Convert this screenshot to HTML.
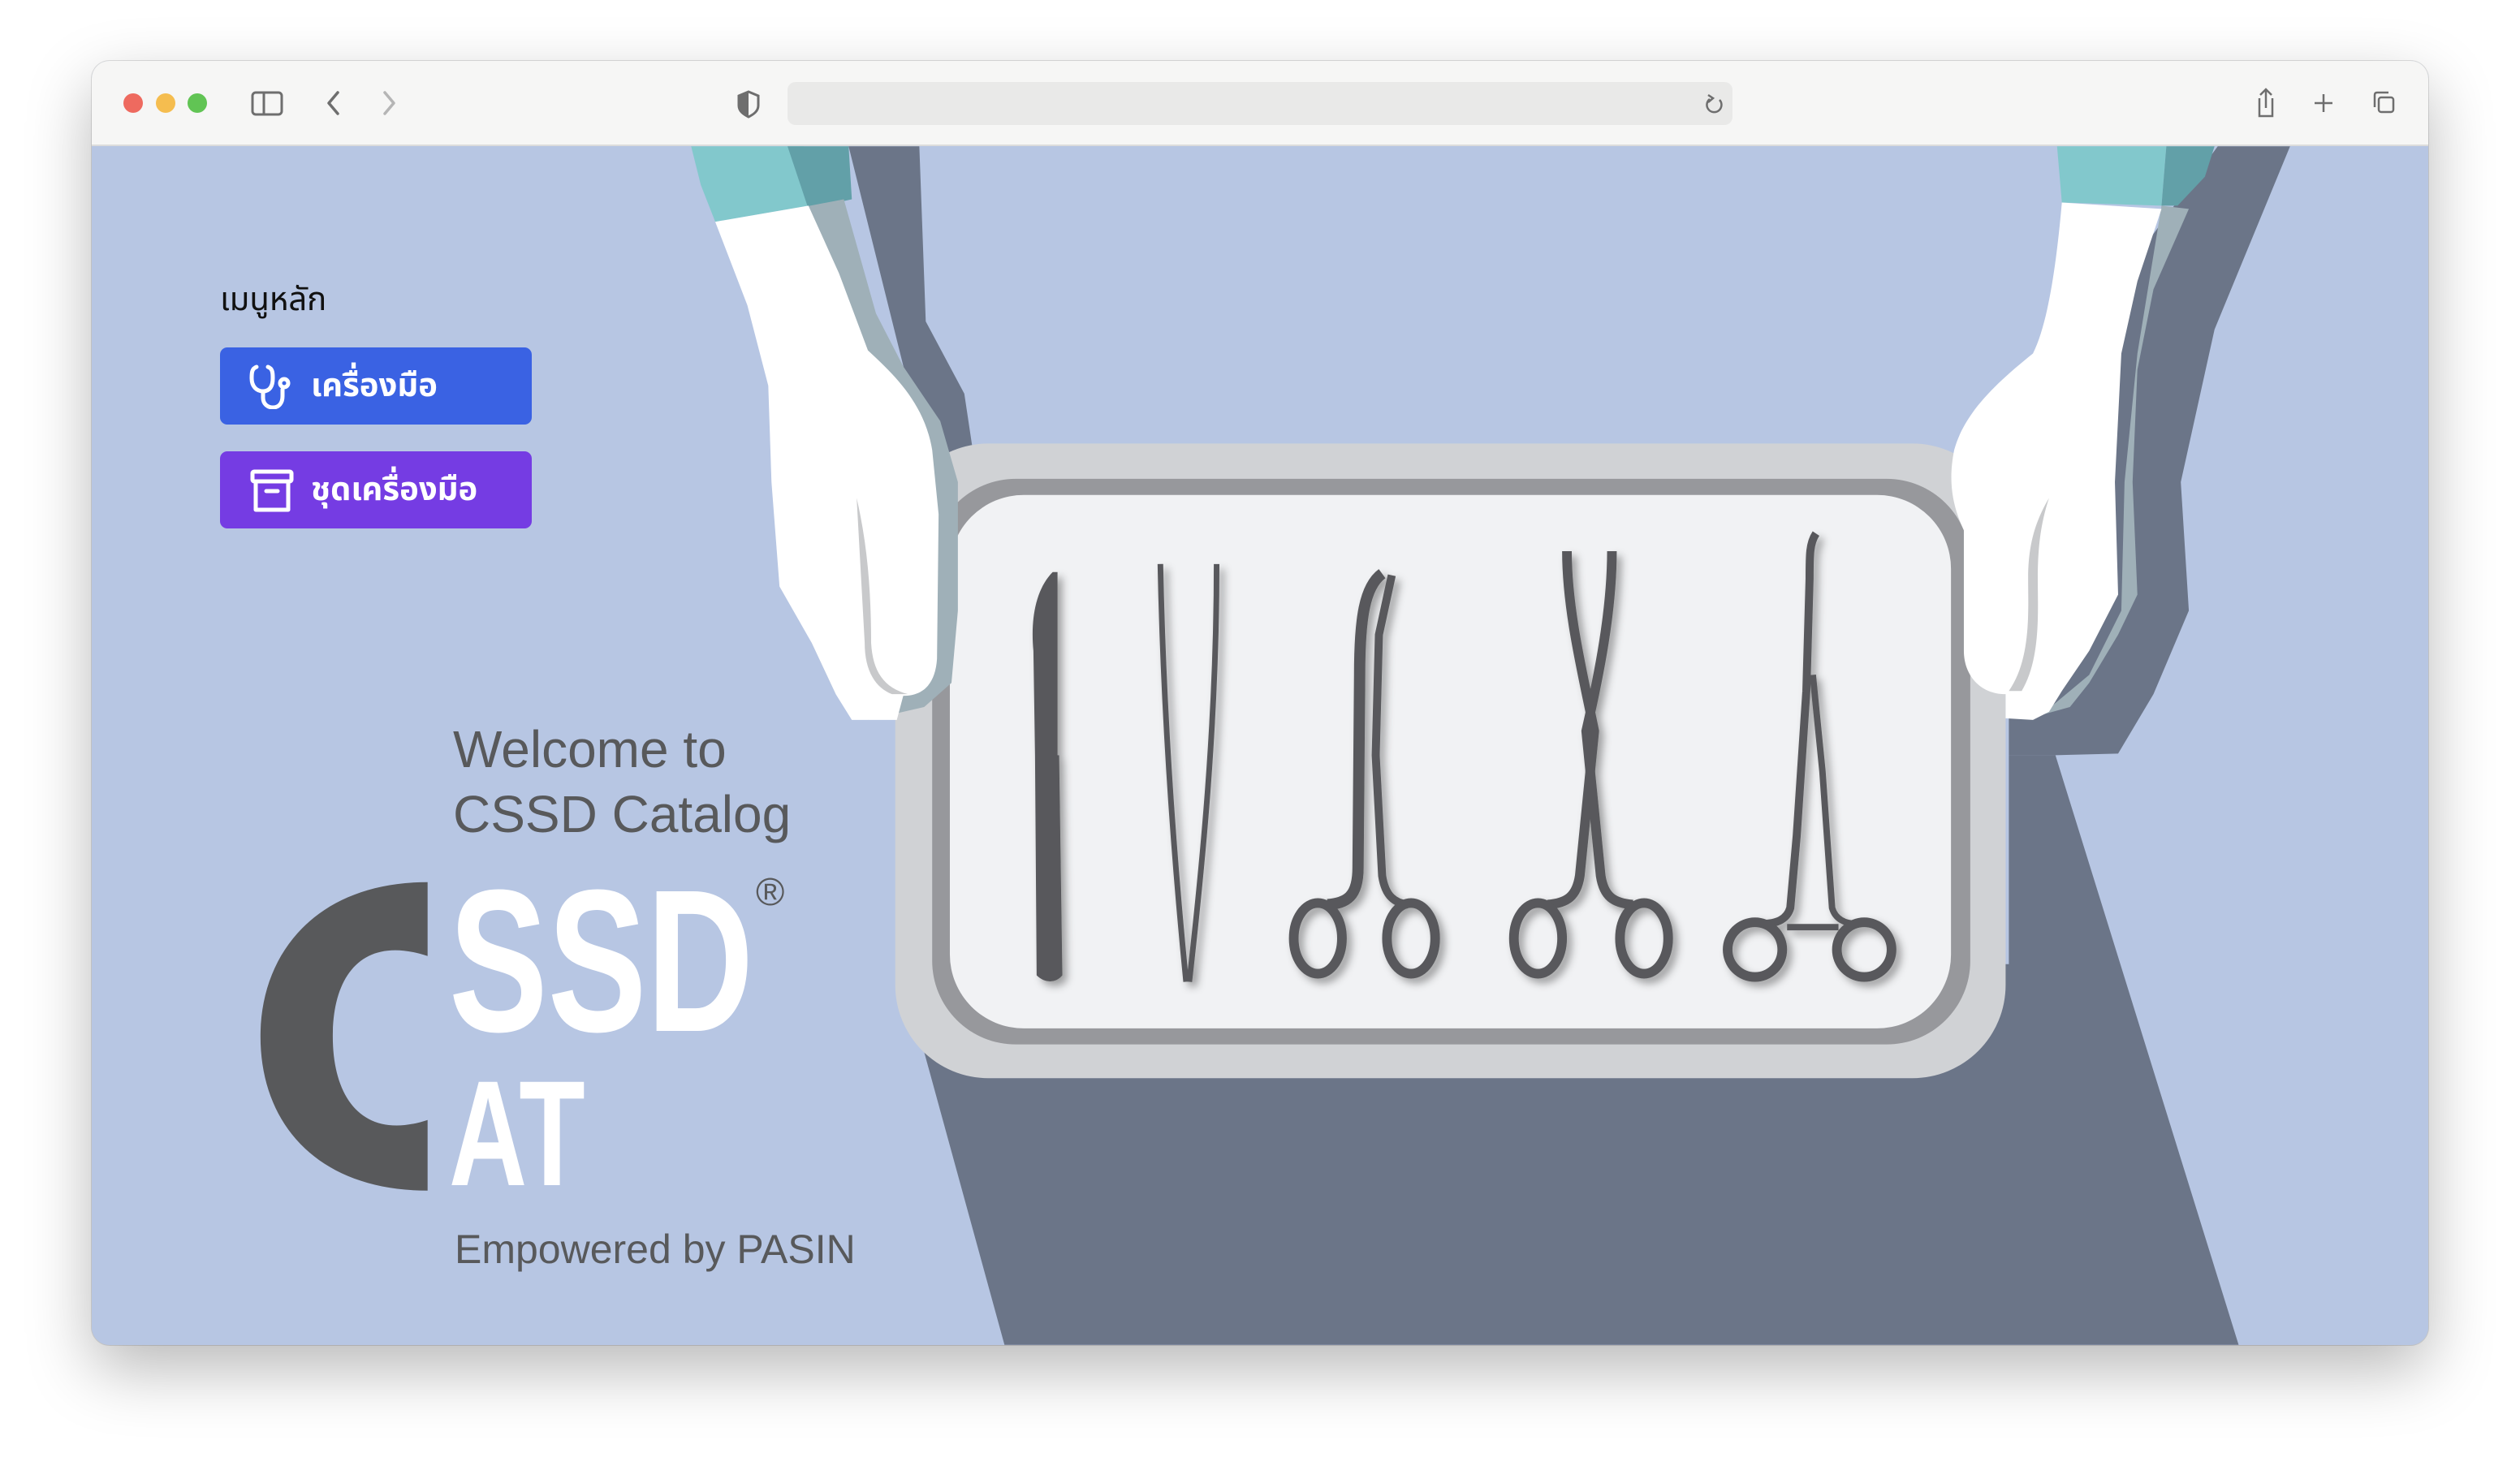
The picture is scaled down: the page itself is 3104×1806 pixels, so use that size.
<!DOCTYPE html>
<html><head><meta charset="utf-8"><style>
*{margin:0;padding:0;box-sizing:border-box}
html,body{width:3104px;height:1806px;background:#fff;overflow:hidden;font-family:"Liberation Sans",sans-serif}
#win{position:absolute;left:113px;top:75px;width:2878px;height:1582px;border-radius:22px;overflow:hidden;background:#b7c6e3;box-shadow:0 30px 80px rgba(0,0,0,.28),0 0 0 1px rgba(0,0,0,.12)}
#bar{position:absolute;left:0;top:0;width:2878px;height:105px;background:#f6f6f5;border-bottom:2px solid #dcdcdc}
#art{position:absolute;left:0;top:0}
.t{position:absolute;color:#58595b;white-space:nowrap}
.btn{position:absolute;left:158px;width:384px;height:95px;border-radius:9px;color:#fff;font-size:40px;font-weight:bold;line-height:95px;padding-left:112px;font-family:"Liberation Sans","Noto Sans Thai",sans-serif}
</style></head><body>
<div id="win">
<div id="bar">
<svg width="2878" height="105" viewBox="113 75 2878 105" style="position:absolute;left:0;top:0">
<circle cx="164" cy="127" r="12" fill="#ee6a5f"/><circle cx="204" cy="127" r="12" fill="#f5bd4f"/><circle cx="243" cy="127" r="12" fill="#61c454"/>
<rect x="311" y="114" width="36" height="27" rx="4" fill="none" stroke="#6e6e6e" stroke-width="3"/><line x1="325" y1="114" x2="325" y2="141" stroke="#6e6e6e" stroke-width="3"/>
<path d="M416,114 L405,127 L416,140" fill="none" stroke="#6e6e6e" stroke-width="3.5" stroke-linecap="round" stroke-linejoin="round"/>
<path d="M474,114 L485,127 L474,140" fill="none" stroke="#b5b5b5" stroke-width="3.5" stroke-linecap="round" stroke-linejoin="round"/>
<path d="M922,113 L934,118 L934,130 C934,137 928,141 922,144 C916,141 910,137 910,130 L910,118 Z" fill="none" stroke="#6e6e6e" stroke-width="3"/><path d="M922,113 L910,118 L910,130 C910,137 916,141 922,144 Z" fill="#6e6e6e"/>
<rect x="970" y="101" width="1164" height="53" rx="10" fill="#e9e9e8"/>
<path d="M2118,123 A9,9 0 1 1 2106,122" fill="none" stroke="#6e6e6e" stroke-width="2.5"/><path d="M2104,117 L2110,121 L2104,126" fill="none" stroke="#6e6e6e" stroke-width="2.5"/>
<path d="M2783,121 L2783,143 L2799,143 L2799,121" fill="none" stroke="#6e6e6e" stroke-width="2.5"/><path d="M2791,133 L2791,110 M2784,117 L2791,110 L2798,117" fill="none" stroke="#6e6e6e" stroke-width="2.5"/>
<path d="M2862,116 L2862,138 M2851,127 L2873,127" stroke="#6e6e6e" stroke-width="2.5"/>
<rect x="2930" y="120" width="18" height="18" rx="3" fill="none" stroke="#6e6e6e" stroke-width="2.5"/><path d="M2925,132 L2925,117 Q2925,114 2928,114 L2942,114" fill="none" stroke="#6e6e6e" stroke-width="2.5"/>
</svg>
</div>
<svg id="art" width="2878" height="1477" viewBox="57 91 1454 746" style="top:105px">
<defs><filter id="sh" x="-30%" y="-10%" width="160%" height="120%"><feDropShadow dx="3" dy="3" stdDeviation="2.5" flood-color="#000" flood-opacity="0.35"/></filter></defs>
<rect x="57" y="91" width="1454" height="746" fill="#b7c6e3"/>
<path d="M560,600 L1250,600 L1250,470 L1279,470 L1393,837 L625,837 Z" fill="#6b7588"/>
<path d="M528,91 L572,91 L576,200 L600,245 L606,285 L606,320 L585,320 Z" fill="#6b7588"/>
<path d="M1380,91 L1425,91 L1378,205 L1357,300 L1362,380 L1340,432 L1318,469 L1279,470 L1250,470 L1250,300 L1300,200 Z" fill="#6b7588"/>
<rect x="557" y="276" width="691" height="395" rx="58" fill="#d0d2d5"/>
<rect x="580" y="298" width="646" height="352" rx="52" fill="#97989c"/>
<rect x="591" y="308" width="623" height="332" rx="46" fill="#f1f2f4"/>
<g fill="#58595b" stroke="#58595b" filter="url(#sh)">
<path d="M655,356 C645,366 641,384 643,405 L644,470 L645,607 C650,612 657,612 661,607 L659,470 L658,470 L658,356 Z" stroke="none"/>
<path d="M722,351 C724,450 731,540 738,611" fill="none" stroke-width="3.5"/><path d="M757,351 C757,450 748,540 740,611" fill="none" stroke-width="3.5"/>
<path d="M860,357 C849,365 846,385 846,420 L845,540 C845,558 838,562 826,563" fill="none" stroke-width="7"/>
<path d="M866,358 L858,395 L856,470 L860,545 C862,558 868,562 876,563" fill="none" stroke-width="5"/>
<ellipse cx="820" cy="584" rx="15" ry="22" fill="none" stroke-width="6"/><ellipse cx="878" cy="584" rx="15" ry="22" fill="none" stroke-width="6"/>
<path d="M975,343 C975,380 985,420 992,455 L983,545 C981,558 975,562 963,563" fill="none" stroke-width="6"/>
<path d="M1003,343 C1003,380 995,420 987,455 L996,545 C998,558 1004,562 1016,563" fill="none" stroke-width="6"/>
<ellipse cx="957" cy="584" rx="15" ry="22" fill="none" stroke-width="6"/><ellipse cx="1023" cy="584" rx="15" ry="22" fill="none" stroke-width="6"/>
<path d="M1130,332 C1126,338 1126,345 1126,360 L1124,430 L1118,520 L1114,565 C1112,572 1106,575 1096,575" fill="none" stroke-width="5"/>
<path d="M1128,420 L1134,480 L1140,565 C1142,572 1148,575 1156,575" fill="none" stroke-width="4"/>
<line x1="1112" y1="577" x2="1144" y2="577" stroke-width="4"/>
<ellipse cx="1092" cy="591" rx="17" ry="17" fill="none" stroke-width="6"/><ellipse cx="1160" cy="591" rx="17" ry="17" fill="none" stroke-width="6"/>
</g>
<path d="M430,91 L500,91 L503,128 L445,138 L436,115 Z" fill="#82c8cc"/>
<path d="M490,91 L528,91 L530,124 L503,130 Z" fill="#62a0a8"/>
<path d="M462,136 L525,124 L545,195 L562,228 L585,262 L596,300 L596,380 L592,425 L575,440 L540,448 L520,432 L505,400 L490,365 L494,300 L492,240 L480,190 Z" fill="#9fb0b8"/>
<path d="M445,138 L503,128 L522,170 L540,218 C555,232 575,250 580,280 L584,320 L583,410 C582,425 575,433 562,433 L558,448 L530,448 L520,432 L505,400 L485,365 L480,300 L478,240 L465,190 Z" fill="#fff"/>
<path d="M533,310 C540,340 542,370 542,400 C543,418 550,428 565,432 L555,432 C545,428 538,418 538,400 Z" fill="#c8c9cb"/>
<path d="M1280,91 L1348,91 L1345,128 L1283,126 Z" fill="#82c8cc"/>
<path d="M1348,91 L1378,91 L1372,110 L1355,128 L1345,128 Z" fill="#62a0a8"/>
<path d="M1345,128 L1362,130 L1340,180 L1330,230 L1327,300 L1330,370 L1318,395 L1300,425 L1288,440 L1270,445 L1300,420 L1320,380 L1322,300 L1330,220 Z" fill="#9fb0b8"/>
<path d="M1283,126 L1345,130 L1330,175 L1320,220 L1316,300 L1318,370 L1300,405 L1283,430 L1275,443 L1265,448 L1248,447 L1248,432 C1232,432 1222,420 1222,405 L1222,330 C1215,315 1212,300 1216,280 C1222,258 1240,240 1265,220 C1275,200 1280,160 1283,126 Z" fill="#fff"/>
<path d="M1275,310 C1266,325 1262,340 1262,360 C1262,380 1264,410 1250,430 L1258,430 C1270,410 1268,380 1268,360 C1268,340 1270,325 1275,310 Z" fill="#c8c9cb"/>
<path d="M266,549 C198,549 162,592 162,645 C162,700 198,741 266,741 L266,697 C227,710 207,685 207,645 C207,605 227,582 266,595 Z" fill="#58595b"/>
</svg>
<div class="t" style="left:158px;top:265px;color:#111;font-size:40px;font-family:'Liberation Sans','Noto Sans Thai',sans-serif">เมนูหลัก</div>
<div class="btn" style="top:353px;background:#3a62e3">เครื่องมือ
<svg style="position:absolute;left:35px;top:20px" width="60" height="56" viewBox="0 0 60 56" fill="none" stroke="#fff" stroke-width="5" stroke-linecap="round"><path d="M10,4 C4,6 4,12 4,18 C4,28 10,34 18,34 C26,34 30,28 30,18 C30,12 30,6 24,4"/><path d="M18,34 L18,42 C18,50 24,54 30,54 C38,54 42,48 42,40 L42,32"/><circle cx="44" cy="24" r="5"/></svg></div>
<div class="btn" style="top:481px;background:#753ce3">ชุดเครื่องมือ
<svg style="position:absolute;left:37px;top:22px" width="56" height="54" viewBox="0 0 56 54" fill="none" stroke="#fff" stroke-width="5" stroke-linejoin="round"><rect x="3" y="3" width="48" height="12" rx="2"/><path d="M7,15 L7,50 L47,50 L47,15"/><line x1="20" y1="27" x2="34" y2="27" stroke-linecap="round"/></svg></div>
<div class="t" style="left:445px;top:808px;font-size:64px;line-height:80px">Welcome to<br>CSSD Catalog</div>
<div class="t" style="left:440px;top:984px;font-size:250px;font-weight:bold;color:#fff;line-height:250px;transform:scaleX(0.73);transform-origin:0 0">SSD</div>
<div class="t" style="left:440px;top:1230px;font-size:185px;font-weight:bold;color:#fff;line-height:185px;transform:scaleX(0.72);transform-origin:0 0">AT</div>
<div class="t" style="left:818px;top:997px;font-size:48px">®</div>
<div class="t" style="left:447px;top:1435px;font-size:50px">Empowered by PASIN</div>
</div>
</body></html>
